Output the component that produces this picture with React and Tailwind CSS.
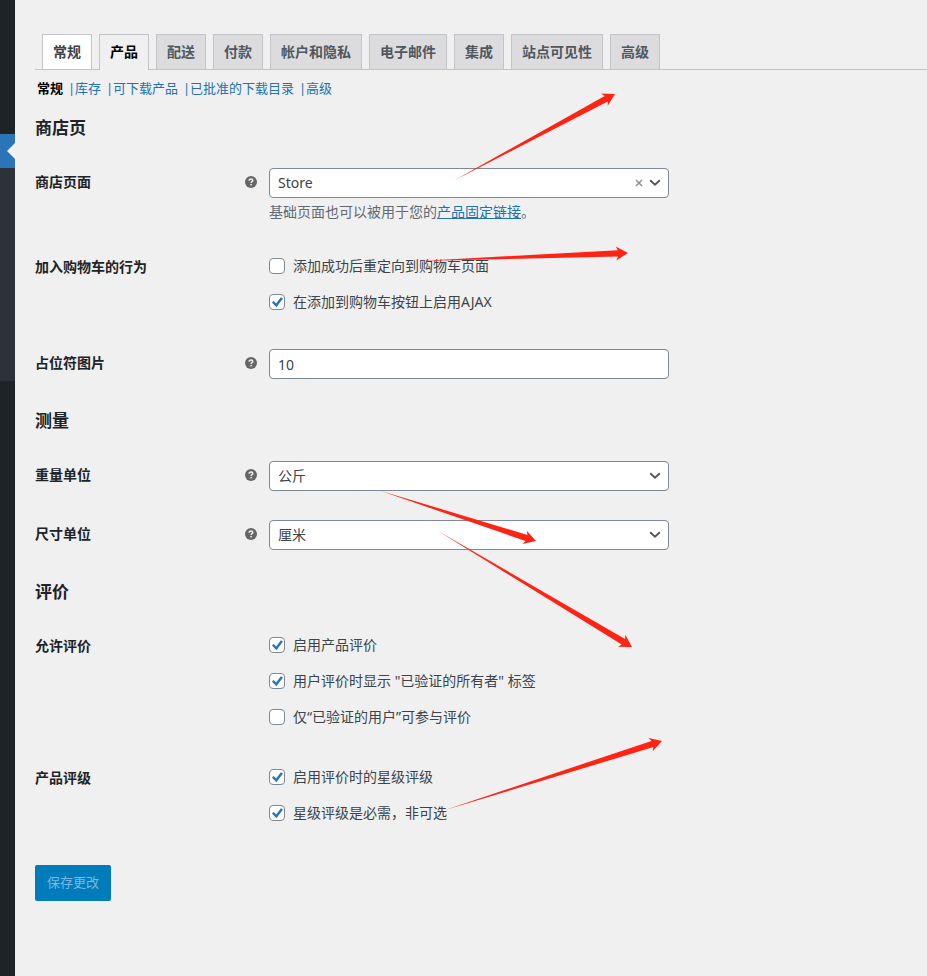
import React, { useState } from "react";

const TABS = ["常规", "产品", "配送", "付款", "帐户和隐私", "电子邮件", "集成", "站点可见性", "高级"];

const TAB_STYLES = {
    hover: "bg-white text-[#3c434a] border-b-0",
    active: "bg-[#f0f0f0] text-black border-b-0 -mb-px pb-[6px]",
    default: "bg-[#dcdcde] text-[#50575e] border-b-0",
};

const SECTIONS = ["常规", "库存", "可下载产品", "已批准的下载目录", "高级"];

const ARROWS = [
    { from: [455, 180], to: [615, 94] },
    { from: [420, 261], to: [628, 253] },
    { from: [381, 491], to: [536, 541] },
    { from: [438, 531], to: [632, 647] },
    { from: [445, 810], to: [662, 741] },
];

// Tapered shaft with a barbed head
function arrowPoints([x1, y1], [x2, y2]) {
    const len = Math.hypot(x2 - x1, y2 - y1);
    const ux = (x2 - x1) / len;
    const uy = (y2 - y1) / len;
    const at = (back, side) => `${x2 - ux * back - uy * side},${y2 - uy * back + ux * side}`;
    return [at(len, 0), at(10, 3.2), at(12, 7), at(0, 0), at(12, -7), at(10, -3.2)].join(" ");
}

function Arrows() {
    return (
        <svg
            className="absolute left-0 top-0 pointer-events-none"
            width="927"
            height="976"
            viewBox="0 0 927 976"
            aria-hidden="true"
        >
            {ARROWS.map((a, i) => (
                <polygon key={i} points={arrowPoints(a.from, a.to)} fill="#ff2313" />
            ))}
        </svg>
    );
}

function Sidebar() {
    return (
        <aside className="w-[15px] shrink-0 bg-[#1d2327]">
            <div className="h-[134px]" />
            <div className="h-[34px] bg-[#2a75b8] flex items-center justify-end">
                <svg width="8" height="16" viewBox="0 0 8 16" aria-hidden="true">
                    <path d="M8 0v16L0 8z" fill="#f0f0f0" />
                </svg>
            </div>
            <div className="h-[213px] bg-[#2c3338]" />
        </aside>
    );
}

function HelpTip() {
    return (
        <svg className="shrink-0" width="12" height="12" viewBox="0 0 12 12" aria-hidden="true">
            <circle cx="6" cy="6" r="6" fill="#666" />
            <path
                d="M4.2 4.7C4.2 3.5 5 2.9 6 2.9s1.8.6 1.8 1.5c0 1.3-1.7 1.3-1.7 2.6"
                fill="none"
                stroke="#f0f0f0"
                strokeWidth="1.5"
            />
            <rect x="5.3" y="8" width="1.5" height="1.5" fill="#f0f0f0" />
        </svg>
    );
}

function Heading({ children }) {
    return <h2 className="mt-4 mb-[13px] text-[17px] leading-6 font-bold text-[#1d2327]">{children}</h2>;
}

function Row({ label, htmlFor, help, children }) {
    return (
        <div className="flex">
            <div className="w-[234px] shrink-0 flex items-center justify-between self-start pt-[19px] pr-3 text-sm leading-5 font-bold text-[#1d2327]">
                {htmlFor ? <label htmlFor={htmlFor}>{label}</label> : <span>{label}</span>}
                {help && <HelpTip />}
            </div>
            <div className="flex-1 min-w-0">{children}</div>
        </div>
    );
}

function Select({ id, value, clearable }) {
    return (
        <div className="relative max-w-[400px]">
            <select
                id={id}
                className="block w-full h-[30px] appearance-none rounded-[4px] border border-[#7e8993] bg-white pl-2 pr-6 text-sm text-[#3c434a]"
            >
                <option>{value}</option>
            </select>
            {clearable && (
                <button type="button" aria-label="×" className="absolute right-[26px] top-[11px]">
                    <svg width="8" height="8" viewBox="0 0 8 8" aria-hidden="true">
                        <path d="M1 1l6 6M7 1L1 7" stroke="#8c8f94" strokeWidth="1.5" />
                    </svg>
                </button>
            )}
            <svg
                className="absolute right-2 top-[11px] pointer-events-none"
                width="12"
                height="8"
                viewBox="0 0 12 8"
                aria-hidden="true"
            >
                <path d="M1.2 1.2L6 5.8l4.8-4.6" fill="none" stroke="#50575e" strokeWidth="1.9" />
            </svg>
        </div>
    );
}

function Checkbox({ label, defaultChecked = false }) {
    const [checked, setChecked] = useState(defaultChecked);
    return (
        <label className="flex items-center gap-2 text-sm leading-5 text-[#3c434a]">
            <span className="relative w-4 h-4 shrink-0">
                <input
                    type="checkbox"
                    checked={checked}
                    onChange={(e) => setChecked(e.target.checked)}
                    className="block w-4 h-4 appearance-none rounded-[4px] border border-[#7e8993] bg-white"
                />
                {checked && (
                    <svg
                        className="absolute inset-0 pointer-events-none"
                        width="16"
                        height="16"
                        viewBox="0 0 16 16"
                        aria-hidden="true"
                    >
                        <path d="M2.9 8.6l1.9-1.5 2.3 2.3 4.8-6.2 2.1 1.4-6.6 8.6z" fill="#2a75b8" />
                    </svg>
                )}
            </span>
            {label}
        </label>
    );
}

function CheckGroup({ items }) {
    return (
        <div className="flex flex-col gap-4 pt-[18px] pb-[22px]">
            {items.map((item) => (
                <Checkbox key={item.label} {...item} />
            ))}
        </div>
    );
}

export default function App() {
    return (
        <div className="relative flex min-h-screen bg-[#f0f0f0] font-['Noto_Sans','Noto_Sans_CJK_SC',sans-serif]">
            <Sidebar />
            <main className="flex-1 min-w-0 pl-5 pt-[34px] pb-10">
                <nav className="flex gap-[7px] pl-[7px] border-b border-[#c3c4c7]">
                    {TABS.map((tab, i) => (
                        <a
                            key={tab}
                            href="#"
                            className={`border border-[#c3c4c7] px-[10px] py-[5px] text-sm leading-6 font-bold whitespace-nowrap ${
                                TAB_STYLES[i === 0 ? "hover" : i === 1 ? "active" : "default"]
                            }`}
                        >
                            {tab}
                        </a>
                    ))}
                </nav>

                <ul className="flex pl-[2px] pt-2 pb-[2px] text-[13px] leading-5 text-[#2271b1]">
                    {SECTIONS.map((section, i) => (
                        <li key={section} className="flex whitespace-nowrap">
                            <a href="#" className={i === 0 ? "font-bold text-black" : ""}>
                                {section}
                            </a>
                            {i < SECTIONS.length - 1 && <span className="w-3 pl-[5px]">|</span>}
                        </li>
                    ))}
                </ul>

                <form onSubmit={(e) => e.preventDefault()}>
                    <Heading>商店页</Heading>
                    <Row label="商店页面" htmlFor="shop-page" help>
                        <div className="pt-[15px] pb-4">
                            <Select id="shop-page" value="Store" clearable />
                            <p className="mt-1 text-sm leading-5 text-[#646970]">
                                基础页面也可以被用于您的
                                <a href="#" className="text-[#2271b1] underline">产品固定链接</a>。
                            </p>
                        </div>
                    </Row>
                    <Row label="加入购物车的行为">
                        <CheckGroup
                            items={[
                                { label: "添加成功后重定向到购物车页面" },
                                { label: "在添加到购物车按钮上启用AJAX", defaultChecked: true },
                            ]}
                        />
                    </Row>
                    <Row label="占位符图片" htmlFor="placeholder-image" help>
                        <div className="pt-[15px] pb-[14px]">
                            <input
                                id="placeholder-image"
                                type="text"
                                defaultValue="10"
                                className="block w-full max-w-[400px] h-[30px] rounded-[4px] border border-[#7e8993] bg-white px-2 text-sm text-[#3c434a]"
                            />
                        </div>
                    </Row>

                    <Heading>测量</Heading>
                    <Row label="重量单位" htmlFor="weight-unit" help>
                        <div className="pt-[15px] pb-[14px]">
                            <Select id="weight-unit" value="公斤" />
                        </div>
                    </Row>
                    <Row label="尺寸单位" htmlFor="dimension-unit" help>
                        <div className="pt-[15px] pb-[14px]">
                            <Select id="dimension-unit" value="厘米" />
                        </div>
                    </Row>

                    <Heading>评价</Heading>
                    <Row label="允许评价">
                        <CheckGroup
                            items={[
                                { label: "启用产品评价", defaultChecked: true },
                                { label: '用户评价时显示 "已验证的所有者" 标签', defaultChecked: true },
                                { label: "仅“已验证的用户”可参与评价" },
                            ]}
                        />
                    </Row>
                    <Row label="产品评级">
                        <CheckGroup
                            items={[
                                { label: "启用评价时的星级评级", defaultChecked: true },
                                { label: "星级评级是必需，非可选", defaultChecked: true },
                            ]}
                        />
                    </Row>

                    <button
                        type="submit"
                        className="mt-5 h-9 rounded-[2px] bg-[#007cba] px-3 text-[13px] text-[#7bb8e4]"
                    >
                        保存更改
                    </button>
                </form>
            </main>
            <Arrows />
        </div>
    );
}
